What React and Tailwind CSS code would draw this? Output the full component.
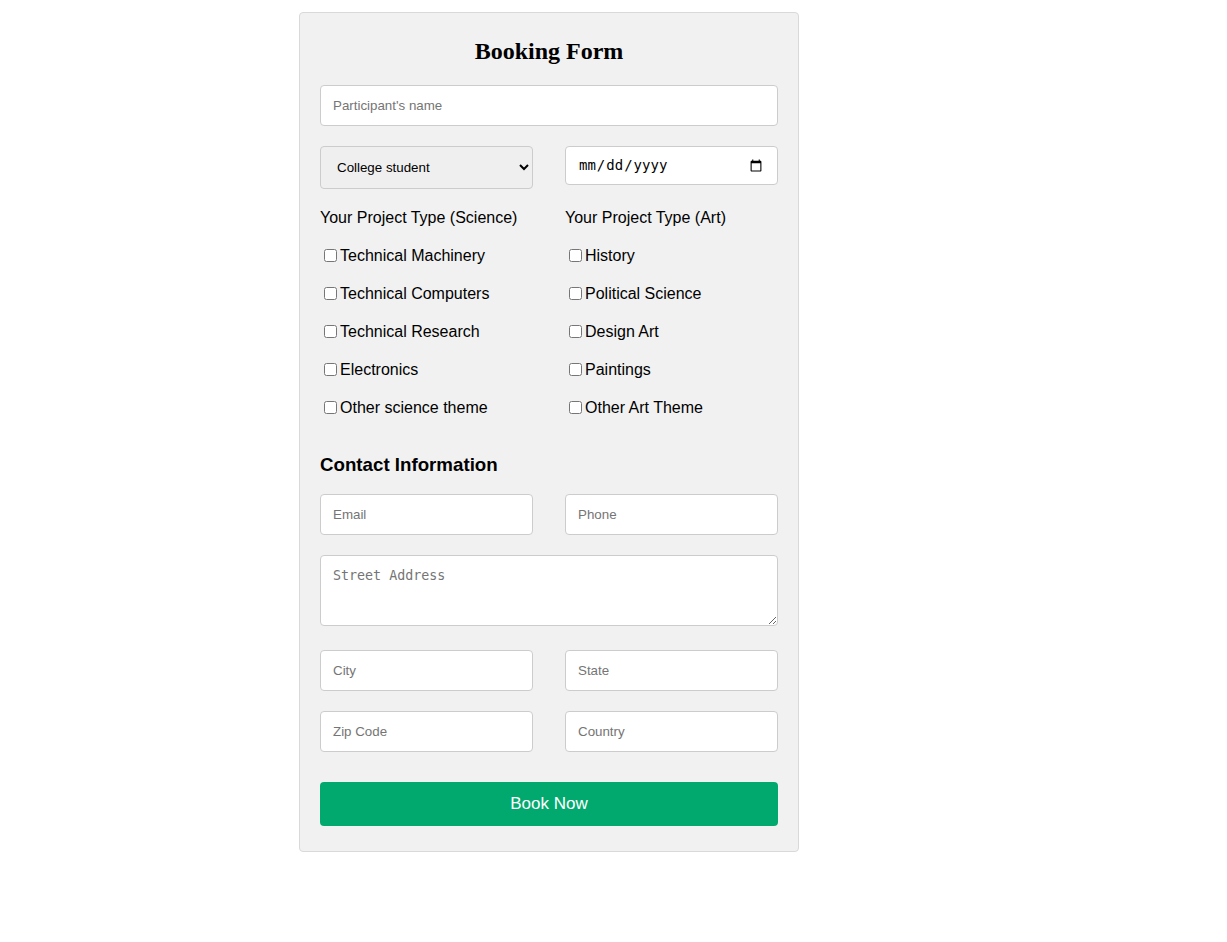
import React from 'react';

const inputCls =
  "block w-full h-[41px] px-3 bg-white border border-[#cccccc] rounded-[4px] font-['Liberation_Sans',Arial,sans-serif] text-[13.333px] text-black placeholder:text-[#757575] outline-none";

const scienceTypes = [
  'Technical Machinery',
  'Technical Computers',
  'Technical Research',
  'Electronics',
  'Other science theme',
];

const artTypes = ['History', 'Political Science', 'Design Art', 'Paintings', 'Other Art Theme'];

const CheckList = ({ title, items }) => (
  <div>
    <p className="h-[18px] leading-[18px] text-[16px]">{title}</p>
    {items.map((item) => (
      <label key={item} className="flex items-start h-[18px] mt-5 text-[16px] leading-[18px]">
        <input type="checkbox" className="w-[13px] h-[13px] ml-1 mr-[3px] mt-[2px] accent-[#0075ff]" />
        {item}
      </label>
    ))}
  </div>
);

export default function App() {
  return (
    <div className="min-h-[942px] bg-white font-['Liberation_Sans',Arial,sans-serif] text-black">
      <div className="ml-[299px] mt-3 inline-block align-top w-[500px] bg-[#f1f1f1] border border-[#d9d9d9] rounded-[4px] p-5">
        <h2 className="mt-1 mb-5 text-center font-['Liberation_Serif','Times_New_Roman',serif] font-bold text-[24px] leading-[28px]">
          Booking Form
        </h2>

        <input type="text" placeholder="Participant's name" className={inputCls} />

        <div className="grid grid-cols-2 gap-8 mt-5 items-start">
          <select
            defaultValue="college"
            className="block w-full h-[43px] pl-3 pr-1 bg-[#efefef] border border-[#cccccc] rounded-[4px] font-['Liberation_Sans',Arial,sans-serif] text-[13.333px] text-black"
          >
            <option value="school">School student</option>
            <option value="college">College student</option>
            <option value="professional">Professional</option>
          </select>
          <input
            type="date"
            className="block w-full h-[39px] pl-3 pr-3 bg-white border border-[#cccccc] rounded-[4px] font-['DejaVu_Sans_Mono',monospace] text-[14px] text-black"
          />
        </div>

        <div className="grid grid-cols-2 gap-8 mt-5">
          <CheckList title="Your Project Type (Science)" items={scienceTypes} />
          <CheckList title="Your Project Type (Art)" items={artTypes} />
        </div>

        <h3 className="mt-[37px] mb-[19px] text-[18.72px] leading-[21px] font-bold">Contact Information</h3>

        <div className="grid grid-cols-2 gap-8">
          <input type="email" placeholder="Email" className={inputCls} />
          <input type="tel" placeholder="Phone" className={inputCls} />
        </div>

        <textarea
          placeholder="Street Address"
          className="block w-full h-[71px] mt-5 px-3 py-[10px] bg-white border border-[#cccccc] rounded-[4px] font-['DejaVu_Sans_Mono',monospace] text-[13.333px] text-black placeholder:text-[#757575] outline-none resize-y"
        />

        <div className="grid grid-cols-2 gap-8 mt-6">
          <input type="text" placeholder="City" className={inputCls} />
          <input type="text" placeholder="State" className={inputCls} />
        </div>

        <div className="grid grid-cols-2 gap-8 mt-5">
          <input type="text" placeholder="Zip Code" className={inputCls} />
          <input type="text" placeholder="Country" className={inputCls} />
        </div>

        <button
          type="button"
          className="block w-full h-11 mt-[30px] mb-[5px] bg-[#02a96f] rounded-[4px] text-white text-[17px] cursor-pointer"
        >
          Book Now
        </button>
      </div>
    </div>
  );
}
